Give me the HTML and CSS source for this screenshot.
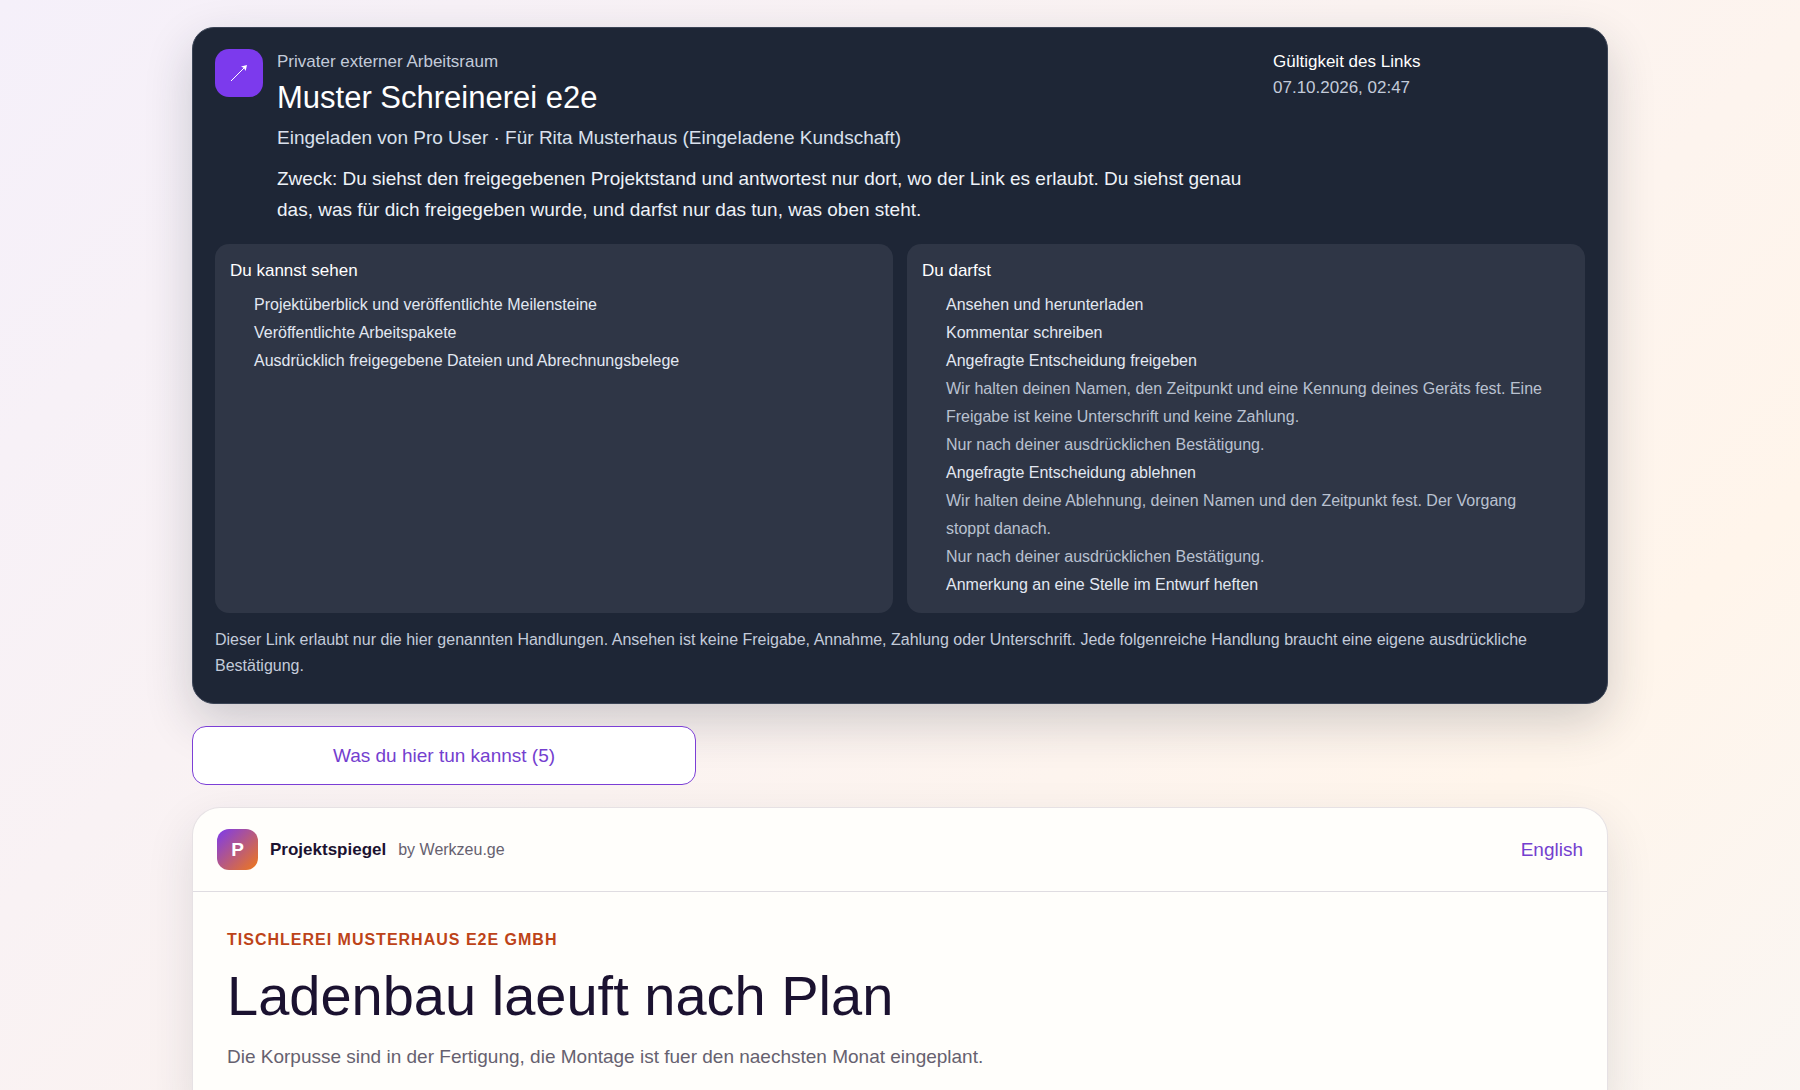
FILE: index.html
```html
<!DOCTYPE html>
<html lang="de">
<head>
<meta charset="utf-8">
<meta name="viewport" content="width=device-width, initial-scale=1">
<title>Projektspiegel</title>
<link rel="stylesheet" href="styles.css">
</head>
<body>
<main class="page">
  <section class="access">
    <header class="access-head">
      <div class="access-icon" aria-hidden="true">
        <svg width="18" height="18" viewBox="0 0 18 18"><path d="M1 17 14 4" fill="none" stroke="#fff" stroke-width="1"/><path d="M17 1 15.6 7 14 4 11 2.4Z" fill="#fff"/></svg>
      </div>
      <div class="access-intro">
        <p class="kicker">Privater externer Arbeitsraum</p>
        <h1 class="company">Muster Schreinerei e2e</h1>
        <p class="invite">Eingeladen von Pro User · Für Rita Musterhaus (Eingeladene Kundschaft)</p>
        <p class="purpose">Zweck: Du siehst den freigegebenen Projektstand und antwortest nur dort, wo der Link es erlaubt. Du siehst genau das, was für dich freigegeben wurde, und darfst nur das tun, was oben steht.</p>
      </div>
      <dl class="validity">
        <dt>Gültigkeit des Links</dt>
        <dd>07.10.2026, 02:47</dd>
      </dl>
    </header>
    <div class="rights">
      <section class="panel">
        <h2 class="panel-title">Du kannst sehen</h2>
        <ul class="panel-list">
          <li>Projektüberblick und veröffentlichte Meilensteine</li>
          <li>Veröffentlichte Arbeitspakete</li>
          <li>Ausdrücklich freigegebene Dateien und Abrechnungsbelege</li>
        </ul>
      </section>
      <section class="panel">
        <h2 class="panel-title">Du darfst</h2>
        <ul class="panel-list">
          <li>Ansehen und herunterladen</li>
          <li>Kommentar schreiben</li>
          <li>Angefragte Entscheidung freigeben
            <span class="note">Wir halten deinen Namen, den Zeitpunkt und eine Kennung deines Geräts fest. Eine Freigabe ist keine Unterschrift und keine Zahlung.</span>
            <span class="note">Nur nach deiner ausdrücklichen Bestätigung.</span>
          </li>
          <li>Angefragte Entscheidung ablehnen
            <span class="note">Wir halten deine Ablehnung, deinen Namen und den Zeitpunkt fest. Der Vorgang stoppt danach.</span>
            <span class="note">Nur nach deiner ausdrücklichen Bestätigung.</span>
          </li>
          <li>Anmerkung an eine Stelle im Entwurf heften</li>
        </ul>
      </section>
    </div>
    <p class="disclaimer">Dieser Link erlaubt nur die hier genannten Handlungen. Ansehen ist keine Freigabe, Annahme, Zahlung oder Unterschrift. Jede folgenreiche Handlung braucht eine eigene ausdrückliche Bestätigung.</p>
  </section>

  <button class="actions-button" type="button">Was du hier tun kannst (5)</button>

  <article class="project">
    <header class="project-bar">
      <span class="logo" aria-hidden="true">P</span>
      <span class="brand">Projektspiegel</span>
      <span class="byline">by Werkzeu.ge</span>
      <a class="language" href="#en">English</a>
    </header>
    <div class="project-body">
      <p class="eyebrow">Tischlerei Musterhaus e2e GmbH</p>
      <h2 class="headline">Ladenbau laeuft nach Plan</h2>
      <p class="lead">Die Korpusse sind in der Fertigung, die Montage ist fuer den naechsten Monat eingeplant.</p>
    </div>
  </article>
</main>
</body>
</html>
```
FILE: styles.css
```css
*, *::before, *::after { box-sizing: border-box; }

body {
  margin: 0;
  min-height: 100vh;
  background: linear-gradient(135deg, #f5f0fa 0%, #fff5eb 79%, #faf6f3 100%);
  color: #1b1230;
  font-family: "Liberation Sans", Arial, sans-serif;
  font-size: 19px;
  line-height: 31px;
}

h1, h2, p, dl, dd, ul { margin: 0; }
h1, h2 { font-weight: 400; }

.page {
  display: flex;
  flex-direction: column;
  gap: 22px;
  max-width: 1464px;
  margin: 0 auto;
  padding: 27px 24px 0;
}

.access {
  display: flex;
  flex-direction: column;
  gap: 14px;
  padding: 21px 22px 24px;
  border: 1px solid #3b4456;
  border-radius: 22px;
  background: #1e2636;
  color: #e8edf5;
  box-shadow: 0 18px 48px rgba(30, 38, 54, 0.2);
}

.access-head {
  display: grid;
  grid-template-columns: 48px minmax(0, 1fr) minmax(0, 312px);
  gap: 14px;
  padding-bottom: 5px;
}

.access-icon {
  display: grid;
  place-items: center;
  height: 48px;
  border-radius: 14px;
  background: #7c3aed;
}

.kicker, .validity { font-size: 17px; line-height: 26px; }
.disclaimer { font-size: 16px; line-height: 26px; }
.kicker, .validity dd, .disclaimer { color: #c3cbda; }

.company {
  font-size: 31px;
  line-height: 40px;
  margin-top: 3px;
  color: #fff;
}

.invite { margin-top: 4px; color: #d9e0ec; }
.purpose { margin-top: 10px; color: #eef2f8; }
.validity dt { color: #fff; }

.rights {
  display: grid;
  grid-template-columns: repeat(2, minmax(0, 1fr));
  gap: 14px;
}

.panel {
  padding: 14px 15px;
  border-radius: 14px;
  background: #2f3646;
}

.panel-title { font-size: 17px; line-height: 26px; color: #fff; }

.panel-list {
  margin-top: 7px;
  padding: 0 12px 0 24px;
  list-style: none;
  font-size: 16px;
  line-height: 28px;
  color: #e2e8f2;
}

.note { display: block; color: #b9c1d0; }

.actions-button {
  width: 504px;
  max-width: 100%;
  height: 59px;
  border: 1px solid #7c3fd6;
  border-radius: 14px;
  background: #fff;
  color: #7440cf;
  font: inherit;
}

.project {
  border: 1px solid #e6e1e4;
  border-bottom: 0;
  border-radius: 28px 28px 0 0;
  background: #fffefb;
  box-shadow: 0 18px 48px rgba(30, 38, 54, 0.12);
}

.project-bar {
  display: flex;
  align-items: center;
  gap: 12px;
  padding: 21px 24px;
  border-bottom: 1px solid #dfdce1;
}

.logo {
  display: grid;
  place-items: center;
  width: 41px;
  height: 41px;
  border-radius: 12px;
  background: linear-gradient(135deg, #7c3aed, #f07818);
  color: #fff;
  font-weight: 700;
}

.brand { font-size: 17px; font-weight: 700; }
.byline { font-size: 16px; color: #66616f; }
.language { margin-left: auto; color: #7440cf; text-decoration: none; }

.project-body { padding: 35px 34px 34px; }

.eyebrow {
  font-size: 16px;
  line-height: 26px;
  font-weight: 700;
  letter-spacing: 1px;
  text-transform: uppercase;
  color: #bd4318;
}

.headline { margin-top: 8px; font-size: 56px; line-height: 70px; }
.lead { margin-top: 10px; color: #66616f; }
```
